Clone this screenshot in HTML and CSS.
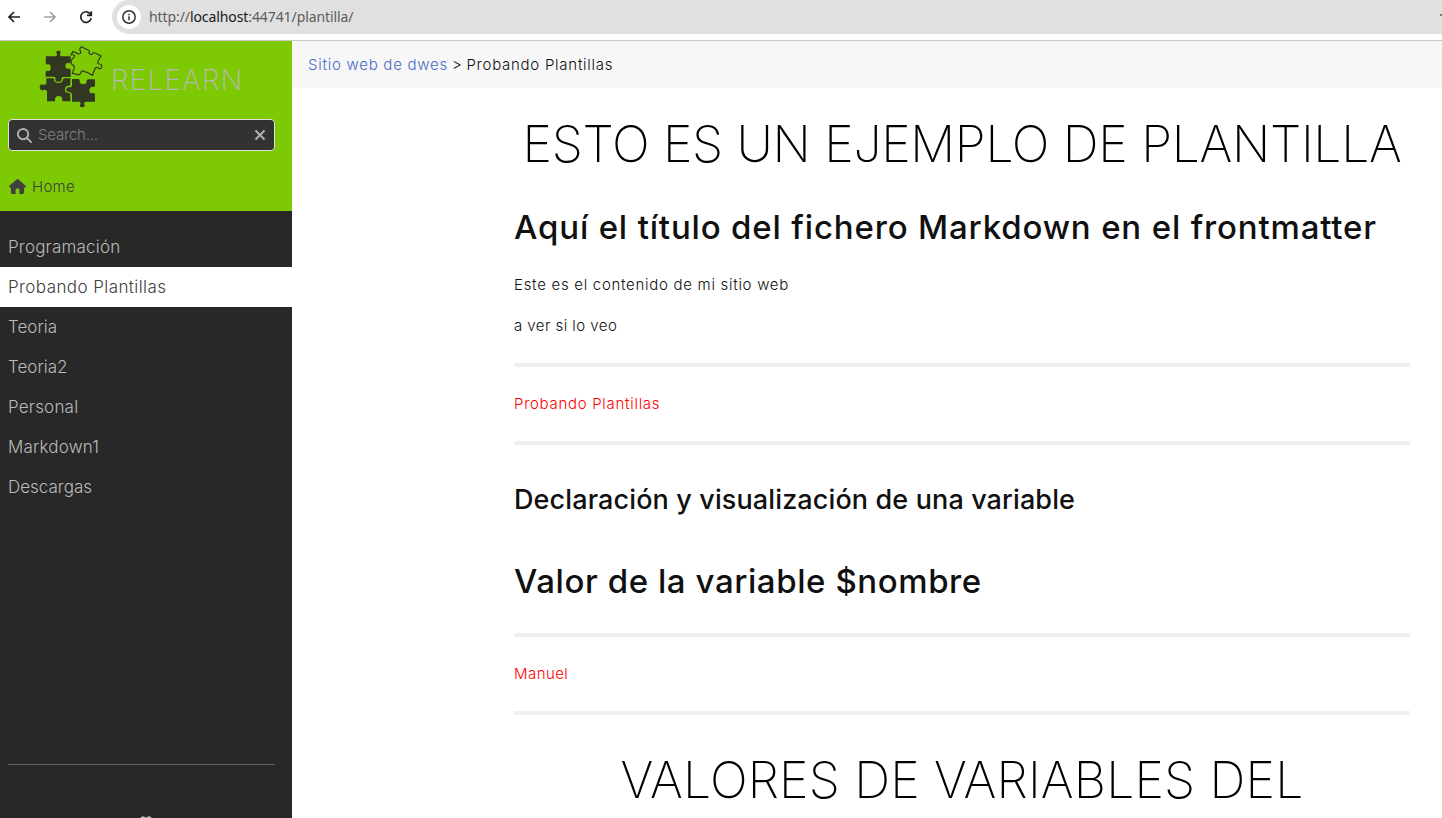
FILE: index.html
```html
<!DOCTYPE html>
<html lang="es">
<head>
<meta charset="utf-8">
<title>Probando Plantillas</title>
<link rel="stylesheet" href="styles.css">
</head>
<body>
<header class="chrome">
  <svg class="nav-icon" viewBox="0 0 16 16"><path d="M14 8H3M8 3 3 8l5 5"/></svg>
  <svg class="nav-icon off" viewBox="0 0 16 16"><path d="M2 8h11M8 3l5 5-5 5"/></svg>
  <svg class="nav-icon" viewBox="0 0 16 16"><path d="M12.7 5.5A5.3 5.3 0 1 0 13.2 9.300M13.300 2.200v4.200H9"/></svg>
  <div class="omnibox">
    <span class="info"><svg viewBox="0 0 16 16"><circle cx="8" cy="8" r="6.200"/><path d="M8 7.300v4M8 4.700v1.500"/></svg></span>
    <span class="url">http://<b>localhost</b>:44741/plantilla/</span>
    <span class="edge"></span>
  </div>
</header>
<div class="page">
  <aside class="sidebar">
    <div class="brand">
      <div class="logo">
        <svg class="puzzle" viewBox="0 0 240 216">
          <path d="M48 43H76Q82 43 81 36Q75 26 85 26Q96 26 90 36Q89 43 94 43H122V60Q120 66 112 62Q105 65 106 73Q107 82 114 80Q122 78 122 84V105H98Q92 107 95 113Q94 120 85 119Q75 120 76 112Q79 106 72 104H47V90Q49 84 57 87Q63 85 62 75Q61 66 55 67Q47 69 47 62Z"/>
          <path d="M49 109H69Q74 109 72 115Q75 124 86 123Q98 122 99 113Q98 109 105 109H121V127Q120 133 113 131Q105 132 105 143Q105 153 113 152Q121 151 121 158V178H100Q94 177 97 169Q95 162 86 162Q76 162 75 171Q77 178 71 178H51V148Q48 141 40 144Q30 147 29 136Q30 124 39 128Q48 130 49 124Z"/>
          <path d="M126 111H146Q151 112 149 120Q151 127 160 127Q170 126 170 118Q168 113 176 112H195V131Q193 137 185 134Q178 137 178 145Q178 155 186 154Q195 151 195 158V179H168Q160 180 163 187Q167 195 157 196Q146 195 151 187Q154 180 146 179H126V158Q125 150 117 150Q108 150 109 142Q110 134 118 136Q126 136 126 129Z"/>
          <path class="line" d="M154 14L174 24Q180 26 177 33Q180 41 188 35Q191 30 197 34L213 42L204 58Q202 65 208 66Q217 67 215 75Q212 83 206 79Q199 73 195 80L187 100L171 91Q165 90 160 87Q153 85 152 94Q149 100 143 98L127 94L133 77Q133 70 125 67Q120 58 126 52Q133 48 134 41Q127 36 124 38L128 29Q138 31 146 36Q153 36 152 29Q146 21 154 14Z"/>
        </svg>
        <span>RELEARN</span>
      </div>
      <div class="search">
        <svg viewBox="0 0 512 512"><path d="M416 208c0 45.900-14.900 88.300-40 122.700l126.600 126.700c12.500 12.500 12.500 32.800 0 45.300s-32.800 12.500-45.300 0L330.700 376A208 208 0 1 1 416 208zM208 352a144 144 0 1 0 0-288 144 144 0 1 0 0 288z"/></svg>
        <span>Search...</span>
        <svg class="clear" viewBox="0 0 12 12"><path d="m1.500 1.500 9 9M10.500 1.500l-9 9"/></svg>
      </div>
      <a class="home"><svg viewBox="0 0 576 512"><path d="M575.800 255.500c0 18-15 32.100-32 32.100h-32l.7 160.200c0 36-28 64.200-56 64.200H352V360c0-22-14-32-32-32h-64c-18 0-32 10-32 32v152H120c-30 0-56-28-56-64V287.600H32c-18 0-32-14-32-32.100 0-9 3-17 10-24L266.400 8c7-7 15-8 22-8s15 2 21 7L564.800 231.500c8 7 12 15 11 24z"/></svg><span>Home</span></a>
    </div>
    <nav class="menu">
      <a>Programación</a>
      <a class="active">Probando Plantillas</a>
      <a class="tight">Teoria</a>
      <a class="tight">Teoria2</a>
      <a>Personal</a>
      <a>Markdown1</a>
      <a class="tight">Descargas</a>
    </nav>
    <hr class="side-rule">
    <footer class="built"><span>Built with</span><svg viewBox="0 0 12 11"><path d="M6 11 .8 5.500Q-.6 2.500 1.300.8 3.900-.8 6 1.800 8.100-.8 10.700.8q1.900 1.700.5 4.700z"/></svg><span>by Hugo</span></footer>
  </aside>
  <main class="main">
    <div class="topbar"><a>Sitio web de dwes</a><i>&gt;</i><span>Probando Plantillas</span></div>
    <article class="content">
      <h1>ESTO ES UN EJEMPLO DE PLANTILLA</h1>
      <h2 class="title">Aquí el título del fichero Markdown en el frontmatter</h2>
      <p>Este es el contenido de mi sitio web</p>
      <p class="short">a ver si lo veo</p>
      <hr>
      <p class="red">Probando Plantillas</p>
      <hr>
      <h3>Declaración y visualización de una variable</h3>
      <h2 class="value">Valor de la variable $nombre</h2>
      <hr>
      <p class="red short">Manuel</p>
      <hr>
      <h1 class="last">VALORES DE VARIABLES DEL</h1>
    </article>
  </main>
</div>
</body>
</html>
```
FILE: styles.css
```css
* { box-sizing: border-box; }
body { margin: 0; height: 818px; overflow: hidden; background: #fff; color: #101010; font: 300 15px Inter, sans-serif; }
.chrome { height: 41px; border-bottom: 1px solid #c8c8c8; display: flex; align-items: flex-start; padding-left: 6px; }
.nav-icon { width: 16px; height: 16px; margin: 9px 20px 0 0; fill: none; stroke: #202124; stroke-width: 1.700; flex: none; }
.nav-icon.off { stroke: #a0a0a0; }
.omnibox { flex: 1; height: 34px; margin-left: -2px; background: #e0e0e0; border-radius: 17px 0 0 17px; display: flex; align-items: center; padding-left: 5px; }
.info { width: 24px; height: 24px; border-radius: 50%; background: #fff; display: grid; place-items: center; }
.info svg { width: 16px; height: 16px; fill: none; stroke: #303030; stroke-width: 1.500; }
.url { margin: -1px 0 0 8px; font: 400 14px "Noto Sans", sans-serif; letter-spacing: -.09px; color: #5c5c5c; }
.url b { font-weight: 400; color: #181818; }
.edge { width: 2px; height: 2px; margin: -4px 0 0 auto; background: #777; }
.page { display: flex; height: 777px; }
.sidebar { width: 292px; background: #282828; color: #bababa; overflow: hidden; flex: none; }
.brand { height: 170px; background: #7dc903; }
.logo { height: 78px; display: flex; padding: 1px 0 0 30px; color: #b8b8b8; }
.logo span { font-size: 28px; font-weight: 250; line-height: 76px; letter-spacing: 1.250px; margin-left: 1px; }
.puzzle { width: 80px; height: 72px; fill: #323723; }
.puzzle .line { fill: none; stroke: #323723; stroke-width: 3.500; }
.search { margin: 0 0 0 8px; width: 267px; height: 32px; border: 1px solid #e0e0e0; border-radius: 4px; background: #323232; display: flex; align-items: center; padding: 0 8px; color: #808080; }
.search span { margin-top: -1px; letter-spacing: -.2px; }
.search svg { width: 15px; height: 15px; fill: #b0b0b0; margin-right: 6px; }
.search .clear { width: 12px; height: 12px; margin: 0; margin-left: auto; fill: none; stroke: #b0b0b0; stroke-width: 2; }
.home { display: flex; align-items: center; height: 20px; margin: 25px 0 0 9px; color: #404040; letter-spacing: .3px; }
.home svg { width: 17px; height: 15px; fill: #404040; margin-right: 6px; }
.menu { padding-top: 16px; height: 553px; }
.menu a { display: block; height: 40px; line-height: 40px; padding-left: 8px; font-size: 17px; letter-spacing: .2px; }
.menu .active { background: #fff; color: #404040; letter-spacing: .42px; }
.menu .tight { letter-spacing: 0; }
.side-rule { margin: 0 17px 0 8px; border: 0; height: 1px; background: #606060; }
.built { display: flex; align-items: flex-start; padding: 49px 0 0 80px; font-size: 13px; line-height: 18px; }
.built svg { width: 12px; height: 11px; margin: 2px 5px 0; fill: #bababa; }
.main { flex: 1; }
.topbar { height: 47px; background: #f7f7f7; padding-left: 16px; display: flex; align-items: center; letter-spacing: .74px; }
.topbar a { color: #486ac9; }
.topbar i { font-style: normal; margin: 0 4px; }
.content { width: 896px; margin-left: 222px; }
h1, h2, h3, p { margin: 0; white-space: nowrap; }
h1 { height: 112px; line-height: 112px; font-size: 50px; font-weight: 150; letter-spacing: -.34px; text-align: center; color: #000; }
h2 { font-size: 33px; font-weight: 500; line-height: 40px; }
h3 { font-size: 27px; font-weight: 500; line-height: 36px; letter-spacing: .12px; margin-top: 37px; }
.title { margin: 7px 0 28px; letter-spacing: .83px; }
p { line-height: 20px; height: 20px; margin: 0 0 21px; letter-spacing: .71px; }
.short { letter-spacing: .45px; }
.content hr { border: 0; height: 4px; background: #efefef; margin: 0; }
.content p + hr { margin-top: 27px; }
.content .red { color: #f00; margin: 27px 0; }
.content .red + hr { margin-top: 0; }
.value { margin: 43px 0 32px; letter-spacing: .58px; }
.last { height: 130px; line-height: 130px; letter-spacing: .15px; }
```
